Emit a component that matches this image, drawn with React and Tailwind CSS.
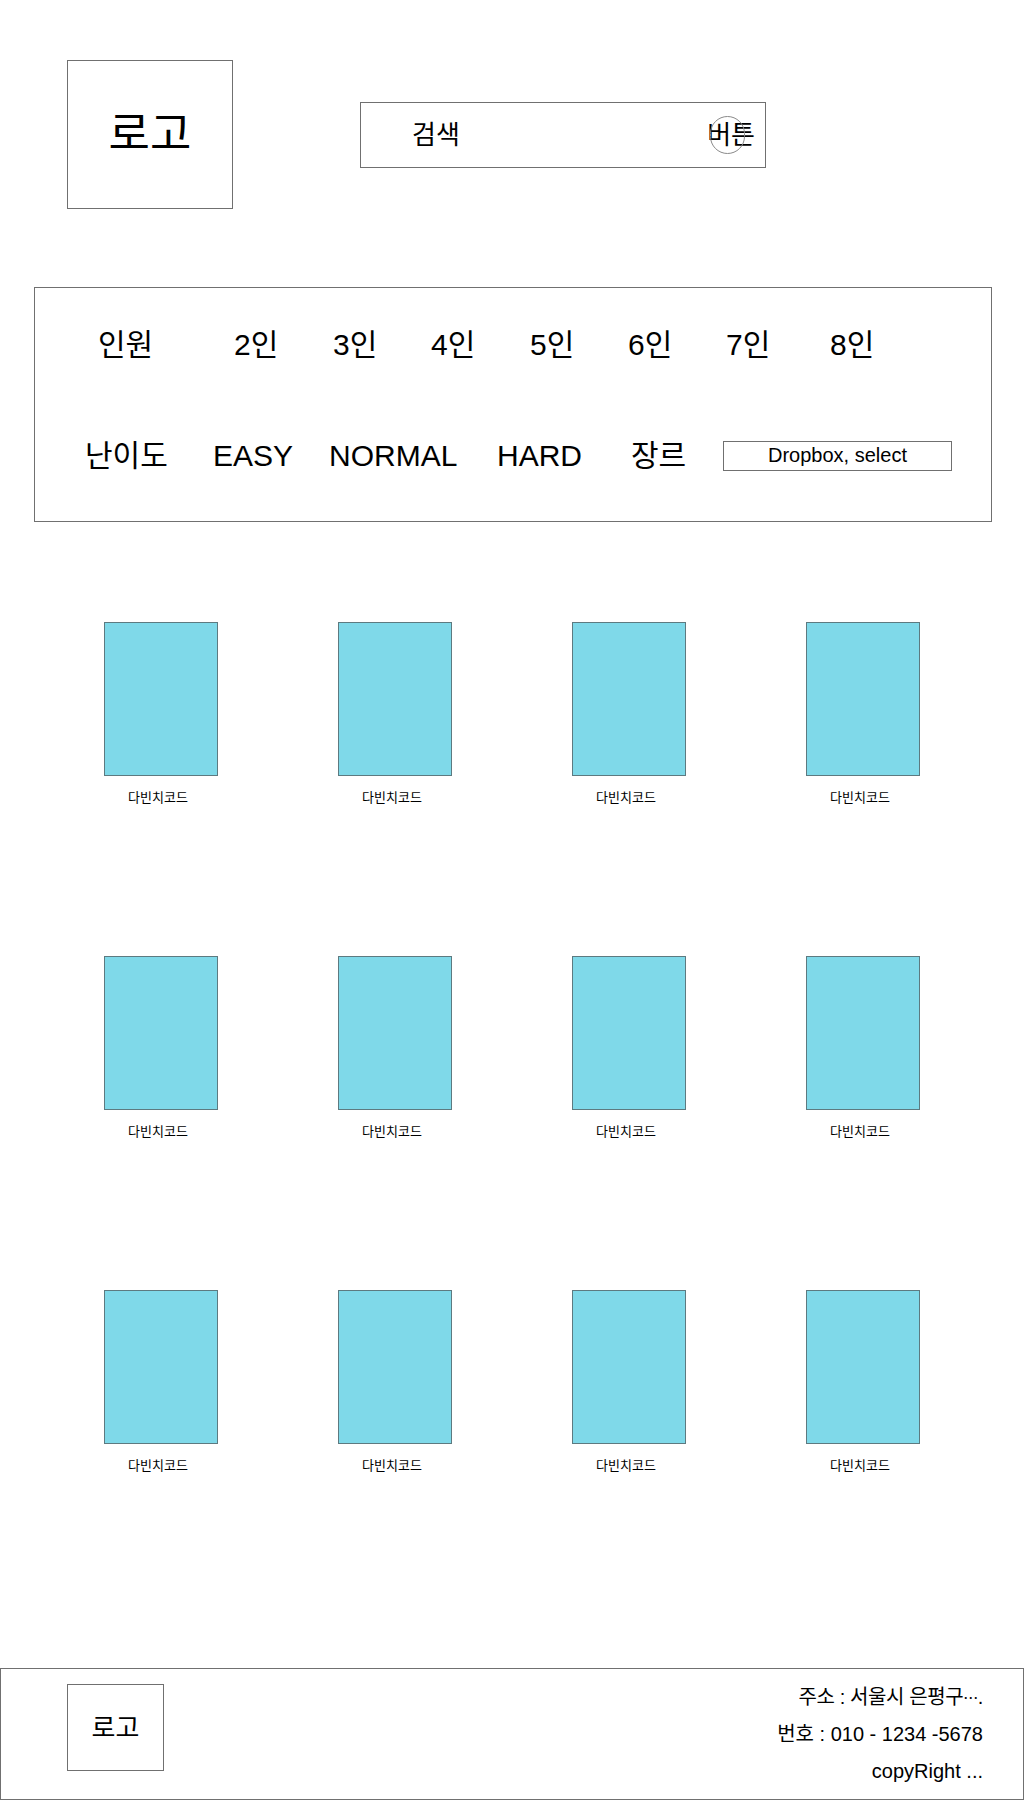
import React from "react";

const Card = () => (
  <div className="flex flex-col items-center w-[114px]">
    <div className="w-[114px] h-[154px] bg-[#7fd9e9] border border-[#5d7a80]" />
    <div className="mt-[14px] pr-[6px] text-[13px] leading-[16px] text-black whitespace-nowrap">다빈치코드</div>
  </div>
);

export default function App() {
  const people = [
    { t: "2인", w: "w-[99px]" },
    { t: "3인", w: "w-[98px]" },
    { t: "4인", w: "w-[99px]" },
    { t: "5인", w: "w-[98px]" },
    { t: "6인", w: "w-[98px]" },
    { t: "7인", w: "w-[104px]" },
    { t: "8인", w: "w-[60px]" },
  ];
  return (
    <div className="w-[1024px] min-h-[1800px] bg-white text-black font-['Liberation_Sans','Noto_Sans_CJK_KR',sans-serif] flex flex-col">
      {/* Header */}
      <div className="flex items-start pl-[67px] pt-[60px]">
        <div className="w-[166px] h-[149px] border border-[#707070] flex items-center justify-center">
          <span className="text-[45px] leading-none">로고</span>
        </div>
        <div className="ml-[127px] mt-[42px] w-[406px] h-[66px] border border-[#707070] flex items-center justify-between pl-[51px] pr-[10px]">
          <span className="text-[26px] leading-none">검색</span>
          <span className="relative text-[26px] leading-none">
            버튼
            <span className="absolute left-[3px] top-1/2 -translate-y-1/2 w-[35px] h-[38px] rounded-full border border-[#8a8a8a]" />
          </span>
        </div>
      </div>

      {/* Filter box */}
      <div className="ml-[34px] mt-[78px] w-[958px] h-[235px] border border-[#707070] flex flex-col pt-[39px]">
        <div className="flex items-center h-[36px] pl-[63px] text-[30px] leading-[36px]">
          <span className="w-[136px]">인원</span>
          {people.map((p) => (
            <span key={p.t} className={p.w}>{p.t}</span>
          ))}
        </div>
        <div className="flex items-center h-[36px] mt-[75px] pl-[50px] text-[30px] leading-[36px]">
          <span className="w-[128px]">난이도</span>
          <span className="w-[116px]">EASY</span>
          <span className="w-[168px]">NORMAL</span>
          <span className="w-[134px]">HARD</span>
          <span className="w-[92px]">장르</span>
          <div className="w-[229px] h-[30px] border border-[#707070] flex items-center justify-center text-[20px] leading-none pb-[3px]">
            Dropbox, select
          </div>
        </div>
      </div>

      {/* Cards */}
      <div className="mt-[100px] pl-[104px] grid grid-cols-[234px_234px_234px_114px] gap-y-[150px]">
        {Array.from({ length: 12 }).map((_, i) => (
          <Card key={i} />
        ))}
      </div>

      {/* Footer */}
      <div className="mt-auto h-[132px] border border-[#707070] flex items-start justify-between pl-[66px] pr-[40px]">
        <div className="mt-[15px] w-[97px] h-[87px] border border-[#707070] flex items-center justify-center">
          <span className="text-[26px] leading-none">로고</span>
        </div>
        <div className="pt-[10px] flex flex-col items-end text-[20px] leading-[37px]">
          <span className="tracking-[-0.4px]">
            주소 : 서울시 은평구<span className="font-['Noto_Sans_CJK_SC',sans-serif] text-[15px]">…</span>.
          </span>
          <span>번호 : 010 - 1234 -5678</span>
          <span>copyRight ...</span>
        </div>
      </div>
    </div>
  );
}
